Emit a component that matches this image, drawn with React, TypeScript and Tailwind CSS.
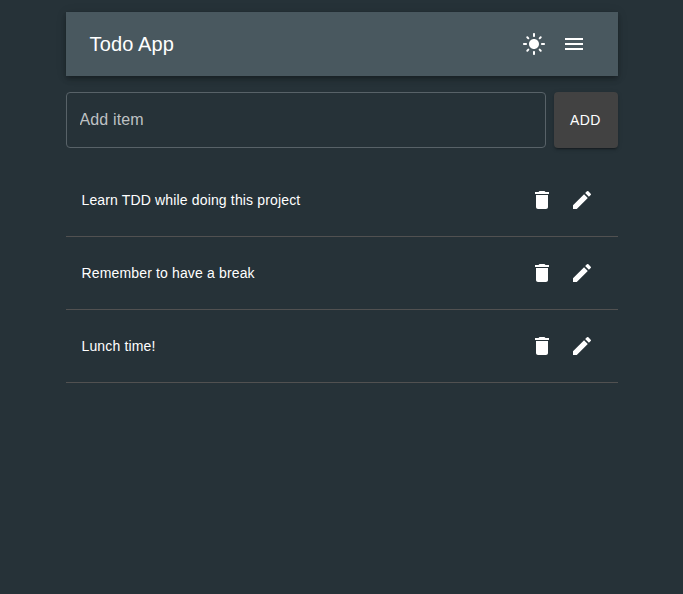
import type { ReactNode } from "react";
import { MdDelete, MdEdit, MdLightMode, MdMenu } from "react-icons/md";

const todos = ["Learn TDD while doing this project", "Remember to have a break", "Lunch time!"];

function IconButton({ label, children }: { label: string; children: ReactNode }) {
  return (
    <button type="button" aria-label={label} className="flex size-10 items-center justify-center rounded-full text-2xl text-white">
      {children}
    </button>
  );
}

function Header() {
  return (
    <header className="flex h-16 items-center justify-between bg-[#49585f] pl-[23.5px] pr-6 shadow-[0px_2px_4px_-1px_rgba(0,0,0,0.2),0px_4px_5px_0px_rgba(0,0,0,0.14),0px_1px_10px_0px_rgba(0,0,0,0.12)]">
      <h1 className="text-xl leading-8 tracking-[0.0075em]">Todo App</h1>
      <div className="flex">
        <IconButton label="Toggle theme"><MdLightMode /></IconButton>
        <IconButton label="Menu"><MdMenu /></IconButton>
      </div>
    </header>
  );
}

function AddForm() {
  return (
    <form className="mt-4 flex h-14 gap-2">
      <input
        placeholder="Add item"
        className="min-w-0 flex-1 rounded border border-[#586268] bg-transparent pl-[12.5px] pr-3 text-base tracking-[0.00938em] outline-none placeholder:text-[#bec1c3]"
      />
      <button
        type="button"
        className="w-16 rounded bg-[#424242] pr-px text-sm tracking-[0.02857em] text-white shadow-[0px_3px_1px_-2px_rgba(0,0,0,0.2),0px_2px_2px_0px_rgba(0,0,0,0.14),0px_1px_5px_0px_rgba(0,0,0,0.12)]"
      >
        ADD
      </button>
    </form>
  );
}

export default function App() {
  return (
    <main className="min-h-screen bg-[#263238] pr-[65px] pl-[66px] pt-3 font-['Liberation_Sans',Arial,sans-serif] text-white">
      <Header />
      <AddForm />
      <ul className="mt-4">
        {todos.map((todo) => (
          <li key={todo} className="flex h-[73px] items-center justify-between border-b border-[#515151] pl-[15.5px] pr-4">
            <span className="text-sm tracking-[0.01071em]">{todo}</span>
            <div className="flex">
              <IconButton label="Delete"><MdDelete /></IconButton>
              <IconButton label="Edit"><MdEdit /></IconButton>
            </div>
          </li>
        ))}
      </ul>
    </main>
  );
}
